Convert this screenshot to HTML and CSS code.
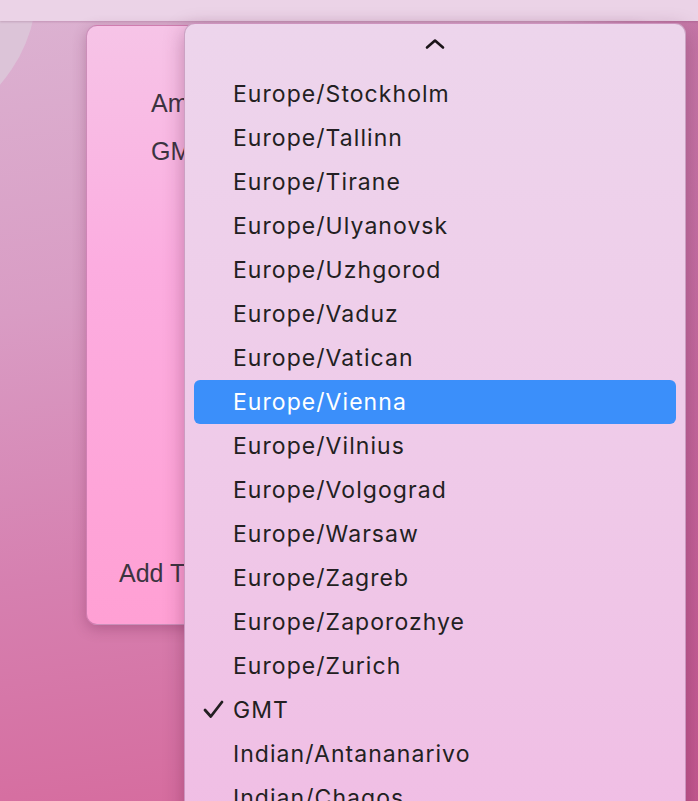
FILE: index.html
```html
<!DOCTYPE html>
<html>
<head>
<meta charset="utf-8">
<link rel="stylesheet" href="styles.css">
</head>
<body>
<div class="desktop">
  <div class="wallpaper-light"></div>
  <div class="menubar"></div>
  <div class="window">
    <div class="zone-list">
      <div class="zone">America/New_York</div>
      <div class="zone">GMT</div>
    </div>
    <div class="add">Add Time Zone</div>
  </div>
  <div class="menu">
    <div class="scroll-up">
      <svg width="20" height="12" viewBox="0 0 20 12"><path d="M2 9.5 L10 2.5 L18 9.5" fill="none" stroke="#1a1418" stroke-width="2.6" stroke-linecap="round" stroke-linejoin="round"/></svg>
    </div>
    <ul class="items">
      <li class="item">Europe/Stockholm</li>
      <li class="item">Europe/Tallinn</li>
      <li class="item">Europe/Tirane</li>
      <li class="item">Europe/Ulyanovsk</li>
      <li class="item">Europe/Uzhgorod</li>
      <li class="item">Europe/Vaduz</li>
      <li class="item">Europe/Vatican</li>
      <li class="item selected">Europe/Vienna</li>
      <li class="item">Europe/Vilnius</li>
      <li class="item">Europe/Volgograd</li>
      <li class="item">Europe/Warsaw</li>
      <li class="item">Europe/Zagreb</li>
      <li class="item">Europe/Zaporozhye</li>
      <li class="item">Europe/Zurich</li>
      <li class="item checked"><svg class="check" width="21" height="19" viewBox="0 0 21 19"><path d="M2 10 L7.8 16.5 L19 2" fill="none" stroke="#231f22" stroke-width="2.8" stroke-linecap="round" stroke-linejoin="round"/></svg>GMT</li>
      <li class="item">Indian/Antananarivo</li>
      <li class="item">Indian/Chagos</li>
    </ul>
  </div>
</div>
</body>
</html>
```

FILE: styles.css
```css
html, body {
  margin: 0;
  padding: 0;
}
body {
  width: 698px;
  height: 801px;
  overflow: hidden;
}
.desktop {
  position: relative;
  width: 698px;
  height: 801px;
  overflow: hidden;
  background:
    linear-gradient(90deg, rgba(180, 80, 140, 0) 0%, rgba(180, 80, 140, 0) 80%, rgba(180, 75, 135, 0.55) 100%),
    linear-gradient(172deg, #dcb3d2 0%, #d99cc4 35%, #d680b0 65%, #d6679a 100%);
}
.wallpaper-light {
  position: absolute;
  left: -263px;
  top: -164px;
  width: 300px;
  height: 300px;
  border-radius: 50%;
  background: #dcc4d8;
}
.menubar {
  position: absolute;
  left: 0;
  top: 0;
  width: 698px;
  height: 21px;
  background: #ebd3e7;
  box-shadow: 0 1px 2px rgba(120, 60, 100, 0.25);
}
.window {
  position: absolute;
  left: 86px;
  top: 25px;
  width: 560px;
  height: 600px;
  box-sizing: border-box;
  border-radius: 11px;
  background: linear-gradient(180deg, #f6c4e7 0%, #fcade0 40%, #ffa0d4 100%);
  border: 1px solid rgba(150, 80, 130, 0.45);
  box-shadow: 0 4px 14px rgba(100, 30, 70, 0.3);
  display: flex;
  flex-direction: column;
  justify-content: space-between;
  font-family: "Liberation Sans", Arial, sans-serif;
  font-size: 25px;
  color: #3b3440;
}
.zone-list {
  display: flex;
  flex-direction: column;
  gap: 19px;
  padding: 63px 0 0 64px;
}
.zone {
  line-height: 29px;
}
.add {
  padding: 0 0 36px 32px;
  line-height: 29px;
}
.menu {
  position: absolute;
  left: 184px;
  top: 23px;
  width: 502px;
  height: 820px;
  box-sizing: border-box;
  border-radius: 11px;
  background: linear-gradient(180deg, #edd5ec 0%, #efcbe9 50%, #f0bde4 100%);
  border: 1px solid rgba(140, 70, 120, 0.35);
  box-shadow: 0 6px 20px rgba(90, 20, 60, 0.35);
  font-family: Inter, "Noto Sans", sans-serif;
  font-size: 23px;
  color: #231f22;
}
.scroll-up {
  height: 48px;
  display: flex;
  justify-content: center;
  padding-top: 14px;
  box-sizing: border-box;
}
.items {
  list-style: none;
  margin: 0;
  padding: 0 9px;
}
.item {
  position: relative;
  height: 44px;
  line-height: 44px;
  padding-left: 39px;
  border-radius: 6px;
  letter-spacing: 1.05px;
}
.item.selected {
  background: #3b8ffa;
  color: #ffffff;
}
.check {
  position: absolute;
  left: 9px;
  top: 12px;
}
```
